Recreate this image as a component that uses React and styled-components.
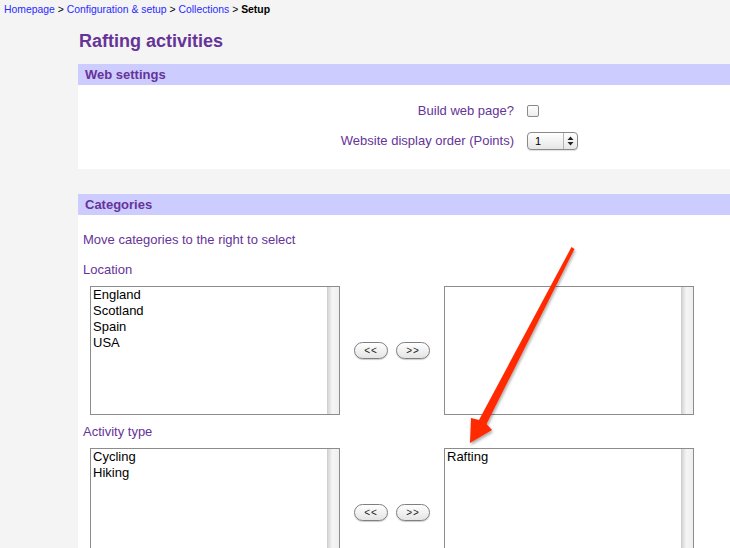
import React from "react";
import styled, { createGlobalStyle } from "styled-components";

const GlobalStyle = createGlobalStyle`
  html, body {
    margin: 0;
    padding: 0;
    background: #f4f4f4;
    font-family: "Liberation Sans", Arial, sans-serif;
    overflow: hidden;
  }
`;

const Page = styled.div`
  position: relative;
  width: 730px;
  height: 548px;
  overflow: hidden;
`;

const Crumbs = styled.div`
  padding: 3px 0 0 4px;
  height: 13px;
  font-size: 10.4px;
  line-height: 13px;
  color: #000;
`;

const Crumb = styled.a`
  color: #2a2aff;
  text-decoration: none;
`;

const Current = styled.b`
  font-weight: bold;
`;

const Main = styled.div`
  margin-left: 78px;
`;

const Title = styled.h1`
  margin: 0;
  padding: 14px 0 0 1px;
  height: 34px;
  font-size: 18px;
  line-height: 22px;
  font-weight: bold;
  color: #663399;
`;

const Panel = styled.section`
  background: #fff;
  margin-bottom: ${(p) => p.$gap || 0}px;
`;

const PanelHeader = styled.div`
  height: 21px;
  background: #ccccff;
  padding-left: 7px;
  font-size: 13px;
  line-height: 21px;
  font-weight: bold;
  color: #663399;
`;

const FormGrid = styled.div`
  display: grid;
  grid-template-columns: 436px auto;
  column-gap: 13px;
  row-gap: 11px;
  align-items: center;
  padding: 17px 0 18px;
  height: 49px;
`;

const Label = styled.label`
  text-align: right;
  font-size: 13px;
  line-height: 16px;
  color: #663399;
`;

const Check = styled.span`
  display: block;
  width: 10px;
  height: 10px;
  border: 1px solid #8a8a8a;
  border-radius: 2px;
  background: linear-gradient(#fff, #ececec);
`;

const Spinner = styled.div`
  display: flex;
  width: 49px;
  height: 16px;
  border: 1px solid #8a8a8a;
  border-radius: 4px;
  background: linear-gradient(#fff, #e6e6e6);
  box-shadow: 0 1px 1px rgba(0, 0, 0, 0.12);
`;

const SpinValue = styled.span`
  flex: 1;
  padding-left: 7px;
  font-size: 11px;
  line-height: 16px;
  color: #000;
`;

const SpinArrows = styled.span`
  width: 13px;
  border-left: 1px solid #b5b5b5;
  display: flex;
  align-items: center;
  justify-content: center;
`;

const CatBody = styled.div`
  padding: 17px 0 0 5px;
`;

const Note = styled.div`
  font-size: 13px;
  line-height: 16px;
  color: #663399;
  margin-bottom: 14px;
`;

const GroupLabel = styled.div`
  font-size: 13px;
  line-height: 16px;
  color: #663399;
  margin-bottom: 8px;
`;

const Picker = styled.div`
  display: flex;
  align-items: center;
  padding-left: 7px;
  margin-bottom: 9px;
`;

const ListBox = styled.div`
  position: relative;
  box-sizing: border-box;
  width: 250px;
  height: 129px;
  border: 1px solid #8c8c8c;
  background: #fff;
  padding: 0 0 0 2px;
`;

const Scrollbar = styled.div`
  position: absolute;
  top: 0;
  right: 0;
  bottom: 0;
  width: 11px;
  background: linear-gradient(to right, #d6d6d6, #f5f5f5 40%, #efefef);
  border-left: 1px solid #d0d0d0;
`;

const Option = styled.div`
  font-size: 13px;
  line-height: 16px;
  color: #000;
`;

const Movers = styled.div`
  width: 104px;
  display: flex;
  justify-content: center;
  gap: 8px;
`;

const MoveButton = styled.button`
  width: 34px;
  height: 17px;
  padding: 0;
  border: 1px solid #7f7f7f;
  border-radius: 9px;
  background: linear-gradient(#ffffff, #e4e4e4);
  box-shadow: 0 1px 1px rgba(0, 0, 0, 0.2);
  font-family: "Liberation Sans", Arial, sans-serif;
  font-size: 10px;
  line-height: 14px;
  letter-spacing: 1px;
  color: #222;
`;

const Arrow = styled.svg`
  position: absolute;
  left: 0;
  top: 0;
  pointer-events: none;
`;

const lists = [
  { label: "Location", left: ["England", "Scotland", "Spain", "USA"], right: [] },
  { label: "Activity type", left: ["Cycling", "Hiking"], right: ["Rafting"] },
];

const CategoryPicker = ({ label, left, right }) => (
  <>
    <GroupLabel>{label}</GroupLabel>
    <Picker>
      <ListBox>
        {left.map((o) => (
          <Option key={o}>{o}</Option>
        ))}
        <Scrollbar />
      </ListBox>
      <Movers>
        <MoveButton>&lt;&lt;</MoveButton>
        <MoveButton>&gt;&gt;</MoveButton>
      </Movers>
      <ListBox>
        {right.map((o) => (
          <Option key={o}>{o}</Option>
        ))}
        <Scrollbar />
      </ListBox>
    </Picker>
  </>
);

export default function App() {
  return (
    <Page>
      <GlobalStyle />
      <Crumbs>
        <Crumb href="#">Homepage</Crumb> &gt; <Crumb href="#">Configuration &amp; setup</Crumb> &gt;{" "}
        <Crumb href="#">Collections</Crumb> &gt; <Current>Setup</Current>
      </Crumbs>
      <Main>
        <Title>Rafting activities</Title>
        <Panel $gap={25}>
          <PanelHeader>Web settings</PanelHeader>
          <FormGrid>
            <Label>Build web page?</Label>
            <Check />
            <Label>Website display order (Points)</Label>
            <Spinner>
              <SpinValue>1</SpinValue>
              <SpinArrows>
                <svg width="7" height="10" viewBox="0 0 7 10">
                  <path d="M3.5 0.5 L6.5 4 H0.5 Z M3.5 9.5 L6.5 6 H0.5 Z" fill="#222" />
                </svg>
              </SpinArrows>
            </Spinner>
          </FormGrid>
        </Panel>
        <Panel>
          <PanelHeader>Categories</PanelHeader>
          <CatBody>
            <Note>Move categories to the right to select</Note>
            {lists.map((l) => (
              <CategoryPicker key={l.label} {...l} />
            ))}
          </CatBody>
        </Panel>
      </Main>
      <Arrow width="730" height="548" viewBox="0 0 730 548">
        <defs>
          <filter id="sh" x="-20%" y="-20%" width="140%" height="140%">
            <feDropShadow dx="1" dy="2" stdDeviation="1.5" floodColor="#000" floodOpacity="0.35" />
          </filter>
        </defs>
        <path
          d="M571.5 247 L574.5 249 L486.5 424 L492 430 L470 443 L471 418 L479 420 Z"
          fill="#ff2a00"
          filter="url(#sh)"
        />
      </Arrow>
    </Page>
  );
}
